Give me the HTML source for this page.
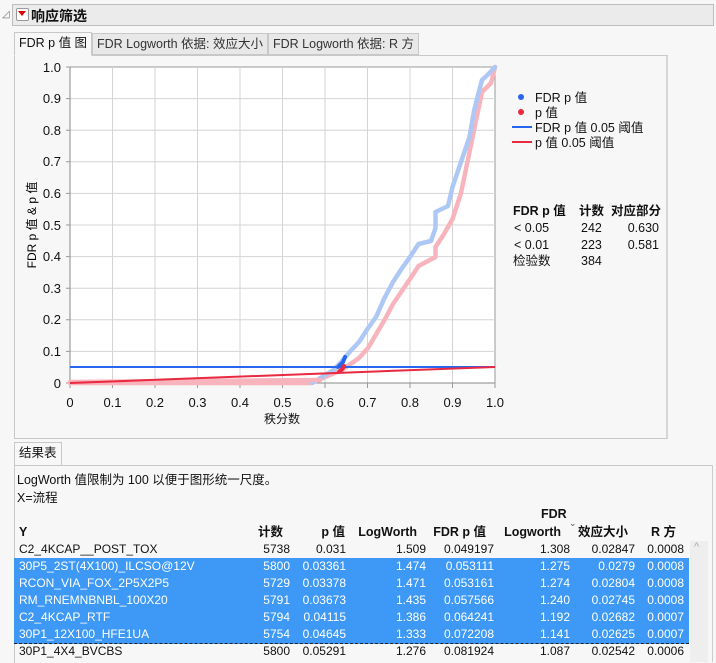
<!DOCTYPE html>
<html><head><meta charset="utf-8"><style>
body{margin:0;width:716px;height:662px;background:#f7f7f7;font-family:"Liberation Sans","Noto Sans CJK SC",sans-serif;overflow:hidden;position:relative;color:#111}
.a{position:absolute;white-space:nowrap}
.hdr{left:12px;top:4px;width:700px;height:20px;background:#ebebeb;border:1px solid #bdbdbd}
.tab{font-size:12.5px;height:20px;line-height:20px;padding:0 4px;border:1px solid #c8c8c8;background:#e8e8e8;color:#333}
.row{position:absolute;left:14px;width:675px;height:17px;font-size:12px;line-height:17px}
.row span{position:absolute;text-align:right}
.sel{background:#3d99f5;color:#fff;border-bottom:1px solid #8bb9e6}
.hd span{position:absolute;font-weight:bold;font-size:12.5px}
</style></head><body>
<div class="a" style="left:2px;top:9px;font-size:10px;color:#777">◿</div>
<div class="a hdr"></div>
<div class="a" style="left:16px;top:8px;width:11px;height:11px;border:1px solid #999;border-radius:2px;background:#fff"></div>
<div class="a" style="left:18px;top:11px;width:0;height:0;border-left:4px solid transparent;border-right:4px solid transparent;border-top:5px solid #d00"></div>
<div class="a" style="left:31px;top:6px;font-size:14px;font-weight:bold">响应筛选</div>

<div class="a" style="left:14px;top:55px;width:651px;height:382px;border:1px solid #c8c8c8;border-right:2px solid #d6d6d6"></div>
<div class="a tab" style="left:14px;top:32px;background:#f7f7f7;border-bottom-color:#f7f7f7;color:#111;height:22px">FDR p 值 图</div>
<div class="a tab" style="left:92px;top:33px">FDR Logworth 依据: 效应大小</div>
<div class="a tab" style="left:268px;top:33px">FDR Logworth 依据: R 方</div>

<svg class="a" style="left:0;top:0" width="716" height="440" font-family="Liberation Sans, Noto Sans CJK SC, sans-serif" font-size="13">
<rect x="70" y="67" width="425" height="316" fill="#fff" stroke="#999"/>
<g stroke="#d4d4d4" stroke-width="1">
<line x1="112.5" y1="67" x2="112.5" y2="383"/><line x1="155" y1="67" x2="155" y2="383"/><line x1="197.5" y1="67" x2="197.5" y2="383"/><line x1="240" y1="67" x2="240" y2="383"/><line x1="282.5" y1="67" x2="282.5" y2="383"/><line x1="325" y1="67" x2="325" y2="383"/><line x1="367.5" y1="67" x2="367.5" y2="383"/><line x1="410" y1="67" x2="410" y2="383"/><line x1="452.5" y1="67" x2="452.5" y2="383"/>
<line x1="70" y1="351.4" x2="495" y2="351.4"/><line x1="70" y1="319.8" x2="495" y2="319.8"/><line x1="70" y1="288.2" x2="495" y2="288.2"/><line x1="70" y1="256.6" x2="495" y2="256.6"/><line x1="70" y1="225" x2="495" y2="225"/><line x1="70" y1="193.4" x2="495" y2="193.4"/><line x1="70" y1="161.8" x2="495" y2="161.8"/><line x1="70" y1="130.2" x2="495" y2="130.2"/><line x1="70" y1="98.6" x2="495" y2="98.6"/>
</g>
<path d="M70 383 L495 383 M70 67 L70 383" stroke="#888"/>
<g stroke="#999">
<path d="M70 383v5M112.5 383v5M155 383v5M197.5 383v5M240 383v5M282.5 383v5M325 383v5M367.5 383v5M410 383v5M452.5 383v5M495 383v5"/>
<path d="M66 383h4M66 351.4h4M66 319.8h4M66 288.2h4M66 256.6h4M66 225h4M66 193.4h4M66 161.8h4M66 130.2h4M66 98.6h4M66 67h4"/>
</g>
<polyline fill="none" stroke="#f7b4bd" stroke-width="4.5" stroke-linecap="round" stroke-linejoin="round" points="70,383 312,383 325,377 342,370 359,358 368,348 384.5,320 393,304 410,279 418.5,266 435.5,257 435.5,247 444,234 452.5,219 461,193 469.5,152 474,130 478,111 482,92 491,83 495,67"/>
<polyline fill="none" stroke="#aec8f5" stroke-width="4.5" stroke-linecap="round" stroke-linejoin="round" points="312,383 333.5,370 342,361 350.5,351 359,342 367.5,329 376,317 384.5,298 393,282 401.5,269 410,257 418.5,244 431,241 435.5,228 435.5,212 448,206 452.5,187 461,162 469.5,137 474,111 478,95 482,80 486.5,76 495,67"/>
<polyline fill="none" stroke="#f7b4bd" stroke-width="4.5" stroke-linecap="round" points="70,382 320,380"/>
<line x1="70" y1="367" x2="495" y2="367" stroke="#2866f0" stroke-width="2"/>
<line x1="70" y1="383" x2="495" y2="367" stroke="#e8293f" stroke-width="2"/>
<path d="M338 367 L343 362 L345 357" stroke="#2866f0" stroke-width="4" fill="none" stroke-linecap="round"/>
<path d="M339 372 L343 368 L344 366" stroke="#e8293f" stroke-width="4" fill="none" stroke-linecap="round"/>
<g text-anchor="end" fill="#111"><text x="61" y="388">0</text><text x="61" y="356">0.1</text><text x="61" y="324">0.2</text><text x="61" y="293">0.3</text><text x="61" y="261">0.4</text><text x="61" y="230">0.5</text><text x="61" y="198">0.6</text><text x="61" y="166">0.7</text><text x="61" y="135">0.8</text><text x="61" y="103">0.9</text><text x="61" y="72">1.0</text></g>
<g text-anchor="middle" fill="#111"><text x="70" y="407">0</text><text x="112.5" y="407">0.1</text><text x="155" y="407">0.2</text><text x="197.5" y="407">0.3</text><text x="240" y="407">0.4</text><text x="282.5" y="407">0.5</text><text x="325" y="407">0.6</text><text x="367.5" y="407">0.7</text><text x="410" y="407">0.8</text><text x="452.5" y="407">0.9</text><text x="495" y="407">1.0</text>
<text x="282" y="423" font-size="12">秩分数</text></g>
<text transform="translate(36,225) rotate(-90)" text-anchor="middle" font-size="12">FDR p 值 &amp; p 值</text>
<circle cx="521" cy="97" r="3" fill="#2866f0"/><circle cx="521" cy="112" r="3" fill="#e8293f"/>
<line x1="512" y1="127" x2="532" y2="127" stroke="#2866f0" stroke-width="2"/><line x1="512" y1="142" x2="532" y2="142" stroke="#e8293f" stroke-width="2"/>
<g font-size="12.5" fill="#111"><text x="535" y="102">FDR p 值</text><text x="535" y="117">p 值</text><text x="535" y="132">FDR p 值 0.05 阈值</text><text x="535" y="147">p 值 0.05 阈值</text>
<g font-weight="bold"><text x="513" y="215">FDR p 值</text><text x="579" y="215">计数</text><text x="611" y="215">对应部分</text></g>
<text x="514" y="232">&lt; 0.05</text><text x="581" y="232">242</text><text x="659" y="232" text-anchor="end">0.630</text>
<text x="514" y="249">&lt; 0.01</text><text x="581" y="249">223</text><text x="659" y="249" text-anchor="end">0.581</text>
<text x="513" y="265">检验数</text><text x="581" y="265">384</text></g>
</svg>

<div class="a tab" style="left:14px;top:442px;background:#f7f7f7;color:#111;border-bottom:none;height:23px">结果表</div>
<div class="a" style="left:14px;top:465px;width:698px;height:197px;border-left:1px solid #c8c8c8;border-top:1px solid #c8c8c8"></div>
<div class="a" style="left:17px;top:469px;font-size:12.5px">LogWorth 值限制为 100 以便于图形统一尺度。</div>
<div class="a" style="left:17px;top:487px;font-size:12.5px">X=流程</div>
<div class="a" style="left:712px;top:465px;width:1px;height:197px;background:#ccc"></div>
<div class="a" style="left:690px;top:541px;width:18px;height:121px;background:#eee"></div>
<div class="a" style="left:694px;top:541px;font-size:11px;color:#aaa">^</div>

<div class="row hd" style="top:506px;height:34px">
<span style="left:527px;top:0">FDR</span><span style="left:555px;top:9px;font-weight:normal;font-size:9px;color:#555">⌄</span>
<span style="left:5px;top:18px">Y</span>
<span style="right:406px;top:18px">计数</span>
<span style="right:344px;top:18px">p 值</span>
<span style="right:272px;top:18px">LogWorth</span>
<span style="right:203px;top:18px">FDR p 值</span>
<span style="right:128px;top:18px">Logworth</span>
<span style="right:61px;top:18px">效应大小</span>
<span style="right:13px;top:18px">R 方</span>
</div>

<div class="row" style="top:541px"><span style="left:5px">C2_4KCAP__POST_TOX</span><span style="right:399px">5738</span><span style="right:343px">0.031</span><span style="right:263px">1.509</span><span style="right:195px">0.049197</span><span style="right:119px">1.308</span><span style="right:54px">0.02847</span><span style="right:5px">0.0008</span></div>
<div class="row sel" style="top:558px"><span style="left:5px">30P5_2ST(4X100)_ILCSO@12V</span><span style="right:399px">5800</span><span style="right:343px">0.03361</span><span style="right:263px">1.474</span><span style="right:195px">0.053111</span><span style="right:119px">1.275</span><span style="right:54px">0.0279</span><span style="right:5px">0.0008</span></div>
<div class="row sel" style="top:575px"><span style="left:5px">RCON_VIA_FOX_2P5X2P5</span><span style="right:399px">5729</span><span style="right:343px">0.03378</span><span style="right:263px">1.471</span><span style="right:195px">0.053161</span><span style="right:119px">1.274</span><span style="right:54px">0.02804</span><span style="right:5px">0.0008</span></div>
<div class="row sel" style="top:592px"><span style="left:5px">RM_RNEMNBNBL_100X20</span><span style="right:399px">5791</span><span style="right:343px">0.03673</span><span style="right:263px">1.435</span><span style="right:195px">0.057566</span><span style="right:119px">1.240</span><span style="right:54px">0.02745</span><span style="right:5px">0.0008</span></div>
<div class="row sel" style="top:609px;border-bottom:1px dashed #222"><span style="left:5px">C2_4KCAP_RTF</span><span style="right:399px">5794</span><span style="right:343px">0.04115</span><span style="right:263px">1.386</span><span style="right:195px">0.064241</span><span style="right:119px">1.192</span><span style="right:54px">0.02682</span><span style="right:5px">0.0007</span></div>
<div class="row sel" style="top:626px;border-bottom:1px dashed #222"><span style="left:5px">30P1_12X100_HFE1UA</span><span style="right:399px">5754</span><span style="right:343px">0.04645</span><span style="right:263px">1.333</span><span style="right:195px">0.072208</span><span style="right:119px">1.141</span><span style="right:54px">0.02625</span><span style="right:5px">0.0007</span></div>
<div class="row" style="top:643px"><span style="left:5px">30P1_4X4_BVCBS</span><span style="right:399px">5800</span><span style="right:343px">0.05291</span><span style="right:263px">1.276</span><span style="right:195px">0.081924</span><span style="right:119px">1.087</span><span style="right:54px">0.02542</span><span style="right:5px">0.0006</span></div>
</body></html>
